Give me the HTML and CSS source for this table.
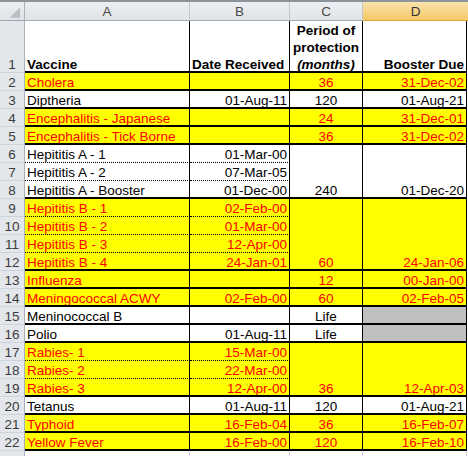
FILE: index.html
```html
<!DOCTYPE html>
<html>
<head>
<meta charset="utf-8">
<link rel="stylesheet" href="styles.css">
</head>
<body>
<div class="topbar"></div>
<div class="sheet">
  <div class="hd corner"><svg width="25" height="19" viewBox="0 0 25 19"><polygon points="21,5 21,16 10,16" fill="#b9bec4"/></svg></div>
  <div class="hd">A</div>
  <div class="hd">B</div>
  <div class="hd">C</div>
  <div class="hd sel">D</div>

  <div class="rh">1</div>
  <div class="cell b1">Vaccine</div>
  <div class="cell b1">Date Received</div>
  <div class="cell b1 m"><div class="multi">Period of<br>protection<br><i>(months)</i></div></div>
  <div class="cell b1 r">Booster Due</div>

  <div class="rh">2</div>
  <div class="cell y">Cholera</div>
  <div class="cell y r"></div>
  <div class="cell y m">36</div>
  <div class="cell y r">31-Dec-02</div>

  <div class="rh">3</div>
  <div class="cell">Diptheria</div>
  <div class="cell r">01-Aug-11</div>
  <div class="cell m">120</div>
  <div class="cell r">01-Aug-21</div>

  <div class="rh">4</div>
  <div class="cell y">Encephalitis - Japanese</div>
  <div class="cell y r"></div>
  <div class="cell y m">24</div>
  <div class="cell y r">31-Dec-01</div>

  <div class="rh">5</div>
  <div class="cell y">Encephalitis - Tick Borne</div>
  <div class="cell y r"></div>
  <div class="cell y m">36</div>
  <div class="cell y r">31-Dec-02</div>

  <div class="rh">6</div>
  <div class="cell dot">Hepititis A - 1</div>
  <div class="cell dot r">01-Mar-00</div>
  <div class="cell m span3">240</div>
  <div class="cell r span3">01-Dec-20</div>
  <div class="rh">7</div>
  <div class="cell dot">Hepititis A - 2</div>
  <div class="cell dot r">07-Mar-05</div>
  <div class="rh">8</div>
  <div class="cell">Hepititis A - Booster</div>
  <div class="cell r">01-Dec-00</div>

  <div class="rh">9</div>
  <div class="cell y dot">Hepititis B - 1</div>
  <div class="cell y dot r">02-Feb-00</div>
  <div class="cell y m span4">60</div>
  <div class="cell y r span4">24-Jan-06</div>
  <div class="rh">10</div>
  <div class="cell y dot">Hepititis B - 2</div>
  <div class="cell y dot r">01-Mar-00</div>
  <div class="rh">11</div>
  <div class="cell y dot">Hepititis B - 3</div>
  <div class="cell y dot r">12-Apr-00</div>
  <div class="rh">12</div>
  <div class="cell y">Hepititis B - 4</div>
  <div class="cell y r">24-Jan-01</div>

  <div class="rh">13</div>
  <div class="cell y">Influenza</div>
  <div class="cell y r"></div>
  <div class="cell y m">12</div>
  <div class="cell y r">00-Jan-00</div>

  <div class="rh">14</div>
  <div class="cell y">Meningococcal ACWY</div>
  <div class="cell y r">02-Feb-00</div>
  <div class="cell y m">60</div>
  <div class="cell y r">02-Feb-05</div>

  <div class="rh">15</div>
  <div class="cell">Meninococcal B</div>
  <div class="cell r"></div>
  <div class="cell m">Life</div>
  <div class="cell g"></div>

  <div class="rh">16</div>
  <div class="cell">Polio</div>
  <div class="cell r">01-Aug-11</div>
  <div class="cell m">Life</div>
  <div class="cell g"></div>

  <div class="rh">17</div>
  <div class="cell y dot">Rabies- 1</div>
  <div class="cell y dot r">15-Mar-00</div>
  <div class="cell y m span3">36</div>
  <div class="cell y r span3">12-Apr-03</div>
  <div class="rh">18</div>
  <div class="cell y dot">Rabies- 2</div>
  <div class="cell y dot r">22-Mar-00</div>
  <div class="rh">19</div>
  <div class="cell y">Rabies- 3</div>
  <div class="cell y r">12-Apr-00</div>

  <div class="rh">20</div>
  <div class="cell">Tetanus</div>
  <div class="cell r">01-Aug-11</div>
  <div class="cell m">120</div>
  <div class="cell r">01-Aug-21</div>

  <div class="rh">21</div>
  <div class="cell y">Typhoid</div>
  <div class="cell y r">16-Feb-04</div>
  <div class="cell y m">36</div>
  <div class="cell y r">16-Feb-07</div>

  <div class="rh">22</div>
  <div class="cell y">Yellow Fever</div>
  <div class="cell y r">16-Feb-00</div>
  <div class="cell y m">120</div>
  <div class="cell y r">16-Feb-10</div>

  <div class="rh last"></div>
  <div class="empty"></div>
  <div class="empty"></div>
  <div class="empty"></div>
  <div class="empty"></div>
</div>
</body>
</html>
```

FILE: styles.css
```css
html, body {
  margin: 0;
  padding: 0;
  overflow: hidden;
  background: #fff;
}
body {
  width: 468px;
  height: 456px;
  font-family: "Liberation Sans", Arial, sans-serif;
  font-size: 13.5px;
  color: #000;
}
.topbar {
  height: 2px;
  background: #8d939b;
}
.sheet {
  display: grid;
  grid-template-columns: 25px 165px 100px 73px 104px;
  grid-template-rows: 19px 52px repeat(21, 18px) 5px;
  width: 468px;
  background: #fff;
}
.hd {
  box-sizing: border-box;
  display: flex;
  align-items: flex-end;
  justify-content: center;
  line-height: 13px;
  padding-bottom: 2px;
  background: linear-gradient(#eceef1, #e1e4e8);
  border-right: 1px solid #c3c8ce;
  border-bottom: 1px solid #9fa7b0;
  color: #4a4a4a;
}
.hd.corner {
  padding: 0;
  align-items: stretch;
  border-right-color: #a9b0b8;
}
.hd.corner svg {
  display: block;
}
.hd.sel {
  background: linear-gradient(#fae3ae, #f4c766);
  border-right: none;
  border-bottom-color: #e2a73c;
  margin-right: -1px;
  color: #333;
}
.rh {
  box-sizing: border-box;
  display: flex;
  align-items: flex-end;
  justify-content: center;
  line-height: 13px;
  padding-bottom: 1px;
  background: #e3e6ea;
  border-right: 1px solid #a9b0b8;
  border-bottom: 1px solid #cfd4d9;
  color: #3c3c3c;
}
.rh.last {
  border-bottom: none;
}
.cell {
  box-sizing: border-box;
  display: flex;
  align-items: flex-end;
  padding: 0 2px;
  line-height: 13px;
  white-space: nowrap;
  overflow: hidden;
  background: #fff;
  border-right: 1px solid #000;
  border-bottom: 2px solid #000;
}
.cell.b1 {
  font-weight: bold;
}
.multi {
  text-align: center;
  line-height: 17px;
  margin-bottom: -2px;
}
.dot {
  border-bottom: 1px dotted #000;
  padding-bottom: 1px;
}
.y {
  background: #ffff00;
  color: #ff0000;
}
.g {
  background: #c0c0c0;
}
.r {
  justify-content: flex-end;
}
.m {
  justify-content: center;
}
.span3 {
  grid-row: span 3;
}
.span4 {
  grid-row: span 4;
}
.empty {
  border-right: 1px solid #d4d8dd;
}
```
